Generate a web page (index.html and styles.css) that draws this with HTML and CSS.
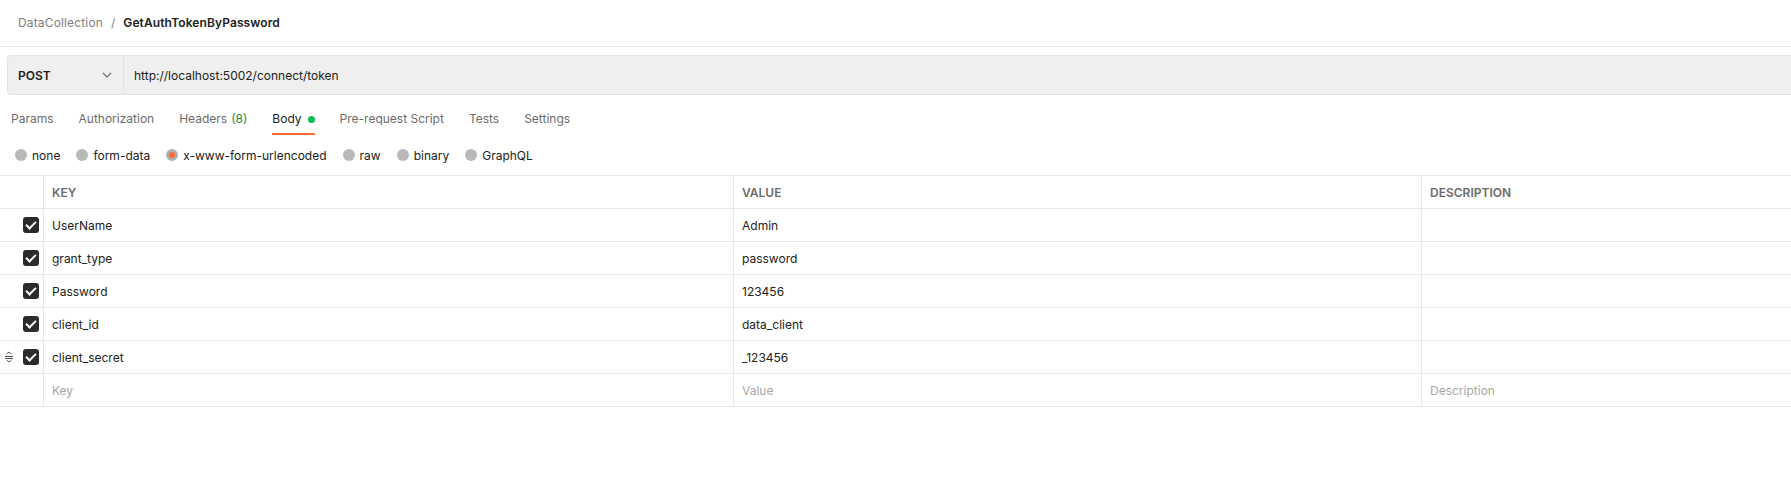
FILE: index.html
```html
<!DOCTYPE html>
<html lang="en">

<head>
    <meta charset="UTF-8">
    <title>GetAuthTokenByPassword</title>
    <link rel="stylesheet" href="styles.css">
</head>

<body>
    <!-- 面包屑 -->
    <div class="crumbs">
        <span class="crumb-parent">DataCollection</span>
        <span class="crumb-sep">/</span>
        <span class="crumb-current">GetAuthTokenByPassword</span>
    </div>

    <!-- 请求地址栏 -->
    <div class="url-bar">
        <div class="method">
            <span>POST</span>
            <svg class="chevron" width="10" height="6" viewBox="0 0 10 6">
                <path d="M1 1l4 4 4-4" fill="none" stroke="#6b6b6b" stroke-width="1.1" />
            </svg>
        </div>
        <div class="url">http://localhost:5002/connect/token</div>
    </div>

    <!-- 请求选项卡 -->
    <div class="tabs">
        <div class="tab">Params</div>
        <div class="tab">Authorization</div>
        <div class="tab">Headers <span class="count">(8)</span></div>
        <div class="tab active">Body <span class="dot"></span></div>
        <div class="tab">Pre-request Script</div>
        <div class="tab">Tests</div>
        <div class="tab">Settings</div>
    </div>

    <!-- body 类型 -->
    <div class="body-types">
        <label class="radio"><span class="circle"></span>none</label>
        <label class="radio"><span class="circle"></span>form-data</label>
        <label class="radio"><span class="circle checked"></span>x-www-form-urlencoded</label>
        <label class="radio"><span class="circle"></span>raw</label>
        <label class="radio"><span class="circle"></span>binary</label>
        <label class="radio"><span class="circle"></span>GraphQL</label>
    </div>

    <!-- 参数表 -->
    <div class="params">
        <div class="row head">
            <div class="cell check"></div>
            <div class="cell">KEY</div>
            <div class="cell">VALUE</div>
            <div class="cell">DESCRIPTION</div>
        </div>
        <div class="row">
            <div class="cell check"><span class="box"></span></div>
            <div class="cell">UserName</div>
            <div class="cell">Admin</div>
            <div class="cell"></div>
        </div>
        <div class="row">
            <div class="cell check"><span class="box"></span></div>
            <div class="cell">grant_type</div>
            <div class="cell">password</div>
            <div class="cell"></div>
        </div>
        <div class="row">
            <div class="cell check"><span class="box"></span></div>
            <div class="cell">Password</div>
            <div class="cell">123456</div>
            <div class="cell"></div>
        </div>
        <div class="row">
            <div class="cell check"><span class="box"></span></div>
            <div class="cell">client_id</div>
            <div class="cell">data_client</div>
            <div class="cell"></div>
        </div>
        <div class="row">
            <div class="cell check">
                <svg class="handle" width="10" height="12" viewBox="0 0 10 12">
                    <path d="M2.5 3L5 1 7.5 3M1 5.5h8M1 7.5h8M2.5 9L5 11 7.5 9" fill="none" stroke="#555" stroke-width="1" />
                </svg>
                <span class="box"></span>
            </div>
            <div class="cell">client_secret</div>
            <div class="cell">_123456</div>
            <div class="cell"></div>
        </div>
        <div class="row">
            <div class="cell check"></div>
            <div class="cell placeholder">Key</div>
            <div class="cell placeholder">Value</div>
            <div class="cell placeholder">Description</div>
        </div>
    </div>
</body>

</html>
```

FILE: styles.css
```css
body {
    margin: 0;
    font-family: Inter, "Liberation Sans", sans-serif;
    font-size: 12px;
    color: #212121;
    background: #fff;
}

.crumbs {
    display: flex;
    align-items: center;
    height: 44px;
    padding: 0 0 2px 18px;
    border-bottom: 1px solid #e6e6e6;
}

.crumb-parent {
    color: #808080;
    letter-spacing: 0.15px;
}

.crumb-sep {
    color: #808080;
    margin: 0 8px 0 8px;
}

.crumb-current {
    font-weight: 600;
    letter-spacing: 0.1px;
}

.url-bar {
    display: flex;
    height: 38px;
    margin: 8px 0 0 7px;
    background: #efefef;
    border: 1px solid #e2e2e2;
    border-right: none;
    border-radius: 4px 0 0 4px;
}

.method {
    display: flex;
    align-items: center;
    justify-content: space-between;
    width: 94px;
    padding: 0 11px 0 10px;
    border-right: 1px solid #e2e2e2;
    font-weight: 600;
}

.url {
    display: flex;
    align-items: center;
    padding-left: 10px;
}

.tabs {
    display: flex;
    gap: 25px;
    padding-left: 11px;
}

.tab {
    line-height: 16px;
    padding: 16px 0 6px;
    border-bottom: 2px solid transparent;
    color: #6b6b6b;
    display: flex;
    align-items: center;
}

.tab .count {
    color: #1f8a3d;
    margin-left: 4px;
}

.tab.active {
    color: #212121;
    border-bottom-color: #ff6c37;
}

.dot {
    width: 7px;
    height: 7px;
    border-radius: 50%;
    background: #0cbb52;
    margin-left: 6px;
}

.body-types {
    display: flex;
    align-items: center;
    height: 40px;
    padding-left: 15px;
    gap: 16px;
}

.radio {
    display: flex;
    align-items: center;
    gap: 5px;
    color: #212121;
}

.circle {
    width: 12px;
    height: 12px;
    border-radius: 50%;
    background: #b9b9b9;
    box-sizing: border-box;
}

.circle.checked {
    background: #ff6c37;
    border: 3px solid #b0b0b0;
}

.params {
    border-top: 1px solid #e6e6e6;
}

.row {
    display: grid;
    grid-template-columns: 44px 690px 688px 1fr;
    height: 32px;
    border-bottom: 1px solid #e6e6e6;
}

.cell {
    display: flex;
    align-items: center;
    padding-left: 8px;
    border-right: 1px solid #e6e6e6;
    white-space: nowrap;
}

.cell:last-child {
    border-right: none;
}

.head .cell {
    font-weight: 600;
    color: #6b6b6b;
}

.cell.check {
    padding: 0 4px 0 4px;
    justify-content: flex-end;
    position: relative;
}

.placeholder {
    color: #a6a6a6;
}

.box {
    width: 16px;
    height: 16px;
    border-radius: 3px;
    background: #2b2b2b;
    position: relative;
}

.box::after {
    content: "";
    position: absolute;
    left: 5px;
    top: 2px;
    width: 4px;
    height: 8px;
    border: solid #fff;
    border-width: 0 2px 2px 0;
    transform: rotate(45deg);
}

.handle {
    position: absolute;
    left: 4px;
    top: 10px;
}
```
